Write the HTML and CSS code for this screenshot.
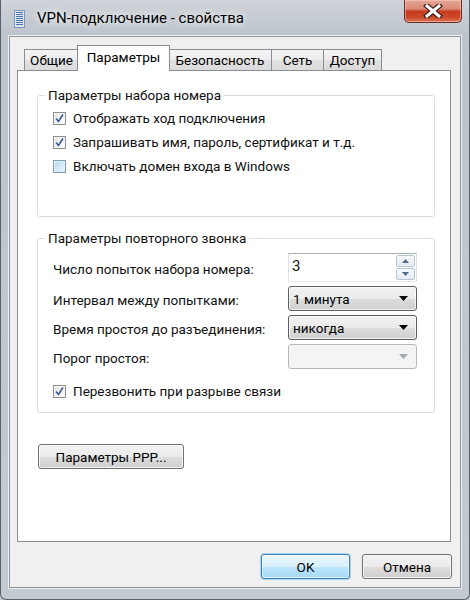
FILE: index.html
```html
<!DOCTYPE html>
<html lang="ru">
<head>
<meta charset="utf-8">
<title>VPN-подключение - свойства</title>
<link rel="stylesheet" href="styles.css">
</head>
<body>
<div class="window">
  <div class="titlebar">
    <svg class="app-icon" width="11" height="18" viewBox="0 0 11 18">
      <rect x="0.5" y="0.5" width="10" height="17" fill="#dde7f1" stroke="#7b96b8"/>
      <rect x="2" y="2" width="7" height="1" fill="#4e72a6"/>
      <rect x="2" y="4" width="7" height="1" fill="#4e72a6"/>
      <rect x="2" y="6" width="7" height="1" fill="#4e72a6"/>
      <rect x="2" y="8" width="7" height="1" fill="#4e72a6"/>
      <rect x="2" y="10" width="7" height="1" fill="#4e72a6"/>
      <rect x="2" y="12" width="7" height="1" fill="#4e72a6"/>
      <rect x="2" y="14" width="7" height="1" fill="#4e72a6"/>
    </svg>
    <span class="title">VPN-подключение - свойства</span>
    <div class="close">
      <svg width="20" height="14" viewBox="0 0 20 14">
        <path d="M4 2 L16 12 M16 2 L4 12" stroke="#3a1d16" stroke-width="5.5" stroke-linecap="square"/>
        <path d="M4 2 L16 12 M16 2 L4 12" stroke="#ffffff" stroke-width="3" stroke-linecap="square"/>
      </svg>
    </div>
  </div>
  <div class="client">
    <div class="tabs">
      <div class="tab t1">Общие</div>
      <div class="tab t2 active">Параметры</div>
      <div class="tab t3">Безопасность</div>
      <div class="tab t4">Сеть</div>
      <div class="tab t5">Доступ</div>
    </div>
    <div class="panel">
      <fieldset class="group g1">
        <legend>Параметры набора номера</legend>
        <div class="check"><span class="box checked"><svg width="11" height="11" viewBox="0 0 11 11"><path d="M2 5.5 L4.5 8.5 L9 1.5" fill="none" stroke="#3a5a9c" stroke-width="1.6"/></svg></span>Отображать ход подключения</div>
        <div class="check"><span class="box checked"><svg width="11" height="11" viewBox="0 0 11 11"><path d="M2 5.5 L4.5 8.5 L9 1.5" fill="none" stroke="#3a5a9c" stroke-width="1.6"/></svg></span>Запрашивать имя, пароль, сертификат и т.д.</div>
        <div class="check"><span class="box hover"></span>Включать домен входа в Windows</div>
      </fieldset>
      <fieldset class="group g2">
        <legend>Параметры повторного звонка</legend>
        <div class="form">
          <span class="lbl">Число попыток набора номера:</span>
          <div class="spin">
            <span class="val">3</span>
            <div class="spin-btns">
              <span class="sb"><svg width="7" height="4" viewBox="0 0 7 4"><path d="M0 4 L3.5 0 L7 4 Z" fill="#4d6a92"/></svg></span>
              <span class="sb"><svg width="7" height="4" viewBox="0 0 7 4"><path d="M0 0 L3.5 4 L7 0 Z" fill="#4d6a92"/></svg></span>
            </div>
          </div>
          <span class="lbl">Интервал между попытками:</span>
          <div class="combo"><span>1 минута</span><svg width="9" height="5" viewBox="0 0 9 5"><path d="M0 0 L9 0 L4.5 5 Z" fill="#000"/></svg></div>
          <span class="lbl">Время простоя до разъединения:</span>
          <div class="combo"><span>никогда</span><svg width="9" height="5" viewBox="0 0 9 5"><path d="M0 0 L9 0 L4.5 5 Z" fill="#000"/></svg></div>
          <span class="lbl">Порог простоя:</span>
          <div class="combo disabled"><span></span><svg width="9" height="5" viewBox="0 0 9 5"><path d="M0 0 L9 0 L4.5 5 Z" fill="#a5a9ad"/></svg></div>
        </div>
        <div class="check redial"><span class="box checked"><svg width="11" height="11" viewBox="0 0 11 11"><path d="M2 5.5 L4.5 8.5 L9 1.5" fill="none" stroke="#3a5a9c" stroke-width="1.6"/></svg></span>Перезвонить при разрыве связи</div>
      </fieldset>
      <button class="btn ppp" type="button">Параметры PPP...</button>
    </div>
    <div class="footer">
      <button class="btn default ok" type="button">OK</button>
      <button class="btn cancel" type="button">Отмена</button>
    </div>
  </div>
</div>
</body>
</html>
```
FILE: styles.css
```css
html, body {
  margin: 0;
  padding: 0;
}
body {
  width: 470px;
  height: 600px;
  overflow: hidden;
  font-family: Roboto, "Noto Sans", sans-serif;
  font-size: 13.5px;
  color: #111;
  background: #c4cad1;
}
.window {
  width: 470px;
  height: 600px;
  box-sizing: border-box;
  display: flex;
  flex-direction: column;
  background: linear-gradient(180deg, #cfd4da 0, #bdc4cb 36px, #c4cad1 100%);
  border: 1px solid #59606a;
  border-top: none;
  border-radius: 0 0 6px 6px;
  padding: 0 8px 11px 8px;
}
.titlebar {
  height: 36px;
  flex-shrink: 0;
  display: flex;
  align-items: center;
}
.app-icon {
  margin-left: 5px;
  margin-top: 1px;
  flex-shrink: 0;
}
.title {
  margin-left: 12px;
  font-size: 15px;
  color: #000;
  text-shadow: 0 0 6px rgba(255, 255, 255, 0.9), 0 0 10px rgba(255, 255, 255, 0.6);
}
.close {
  margin-left: auto;
  margin-right: -1px;
  align-self: flex-start;
  width: 58px;
  height: 23px;
  box-sizing: border-box;
  border: 1px solid #6a2e24;
  border-top: none;
  border-radius: 0 0 5px 5px;
  background: linear-gradient(180deg, #e6a595 0, #dc8a78 40%, #c63a20 52%, #cd4a2d 80%, #e0785a 100%);
  box-shadow: inset 0 0 0 1px rgba(255, 220, 210, 0.45);
  display: flex;
  align-items: center;
  justify-content: center;
}
.client {
  flex: 1;
  display: flex;
  flex-direction: column;
  background: #f0f0f0;
  border: 1px solid #8d949c;
  box-shadow: 0 0 0 1px #eef1f4;
  padding: 8px 9px 8px 7px;
}
.tabs {
  height: 25px;
  display: flex;
  align-items: flex-end;
  padding-left: 7px;
  flex-shrink: 0;
}
.tab {
  height: 21px;
  box-sizing: border-box;
  border: 1px solid #898c95;
  border-bottom: none;
  background: linear-gradient(180deg, #f4f4f4 0, #ececec 50%, #e2e2e2 51%, #dadada 100%);
  display: flex;
  align-items: center;
  justify-content: center;
  margin-left: -1px;
  color: #000;
}
.t1 { width: 55px; margin-left: 0; }
.t2 { width: 93px; }
.t3 { width: 104px; }
.t4 { width: 53px; }
.t5 { width: 59px; }
.tab.active {
  height: 26px;
  margin-left: -2px;
  margin-right: -1px;
  margin-bottom: -1px;
  padding-bottom: 3px;
  background: #fff;
  position: relative;
  z-index: 1;
}
.panel {
  flex: 1;
  background: #fff;
  border: 1px solid #898c95;
  padding: 15px 15px 0 19px;
  display: flex;
  flex-direction: column;
  align-items: flex-start;
}
.group {
  align-self: stretch;
  margin: 0;
  min-width: 0;
  border: 1px solid #d5dfe5;
  border-radius: 3px;
  padding: 2px 17px 38px 15px;
}
.group legend {
  padding: 0 3px;
  margin-left: -8px;
  line-height: 18px;
  color: #111;
}
.g2 {
  margin-top: 12px;
  padding-top: 6px;
  padding-bottom: 9px;
}
.check {
  display: flex;
  align-items: center;
  height: 24px;
  gap: 7px;
}
.box {
  width: 13px;
  height: 13px;
  box-sizing: border-box;
  border: 1px solid #8e8f8f;
  background: linear-gradient(135deg, #dedede 0, #f4f4f4 60%, #ffffff 100%);
  box-shadow: inset 0 0 0 1px #f7f7f7;
  display: flex;
  align-items: center;
  justify-content: center;
  flex-shrink: 0;
}
.box.hover {
  border-color: #7f9db9;
  background: linear-gradient(135deg, #b7d8f1 0, #d6eaf8 55%, #eef7fd 100%);
  box-shadow: inset 0 0 0 1px #deeefb;
}
.form {
  display: grid;
  grid-template-columns: 1fr 129px;
  grid-template-rows: 29px 25px 25px 25px;
  row-gap: 4px;
  align-items: center;
}
.lbl {
  padding-top: 3px;
}
.spin {
  height: 29px;
  box-sizing: border-box;
  border: 1px solid #abadb3;
  border-color: #abadb3 #dbdfe6 #e3e9ef #e2e3ea;
  background: #fff;
  display: flex;
  align-items: center;
  padding: 0 1px 0 3px;
}
.val {
  font-size: 15px;
  margin-top: -3px;
}
.spin-btns {
  margin-left: auto;
  width: 19px;
  display: flex;
  flex-direction: column;
  gap: 1px;
}
.sb {
  height: 12px;
  box-sizing: border-box;
  border: 1px solid #b9c6d4;
  border-radius: 2px;
  background: linear-gradient(180deg, #f6f9fc 0, #e4ebf2 100%);
  display: flex;
  align-items: center;
  justify-content: center;
}
.combo {
  height: 25px;
  box-sizing: border-box;
  border: 1px solid #5e5e5e;
  border-radius: 3px;
  background: linear-gradient(180deg, #f2f2f2 0, #ebebeb 50%, #dddddd 51%, #cfcfcf 100%);
  box-shadow: inset 0 0 0 1px rgba(255, 255, 255, 0.7);
  display: flex;
  align-items: center;
  justify-content: space-between;
  padding: 0 8px 0 4px;
  color: #000;
}
.combo.disabled {
  border-color: #b5b9bd;
  background: #f4f4f4;
  box-shadow: none;
}
.redial {
  margin-top: 10px;
}
.btn {
  font: inherit;
  color: #000;
  height: 25px;
  box-sizing: border-box;
  border: 1px solid #707070;
  border-radius: 3px;
  background: linear-gradient(180deg, #f2f2f2 0, #ebebeb 50%, #dddddd 51%, #cfcfcf 100%);
  box-shadow: inset 0 0 0 1px rgba(255, 255, 255, 0.75);
  padding: 0;
  margin: 0;
}
.ppp {
  margin-top: 31px;
  margin-left: 1px;
  width: 146px;
}
.footer {
  display: flex;
  justify-content: flex-end;
  gap: 12px;
  margin-top: 12px;
  margin-right: -1px;
  flex-shrink: 0;
}
.ok {
  width: 89px;
  border-color: #3c7fb1;
  background: linear-gradient(180deg, #eaf6fd 0, #d9f0fc 50%, #bee6fd 51%, #a7d9f5 100%);
  box-shadow: inset 0 0 0 1px rgba(255, 255, 255, 0.6), 0 0 0 1px #a9d6f2;
}
.cancel {
  width: 90px;
}
```
